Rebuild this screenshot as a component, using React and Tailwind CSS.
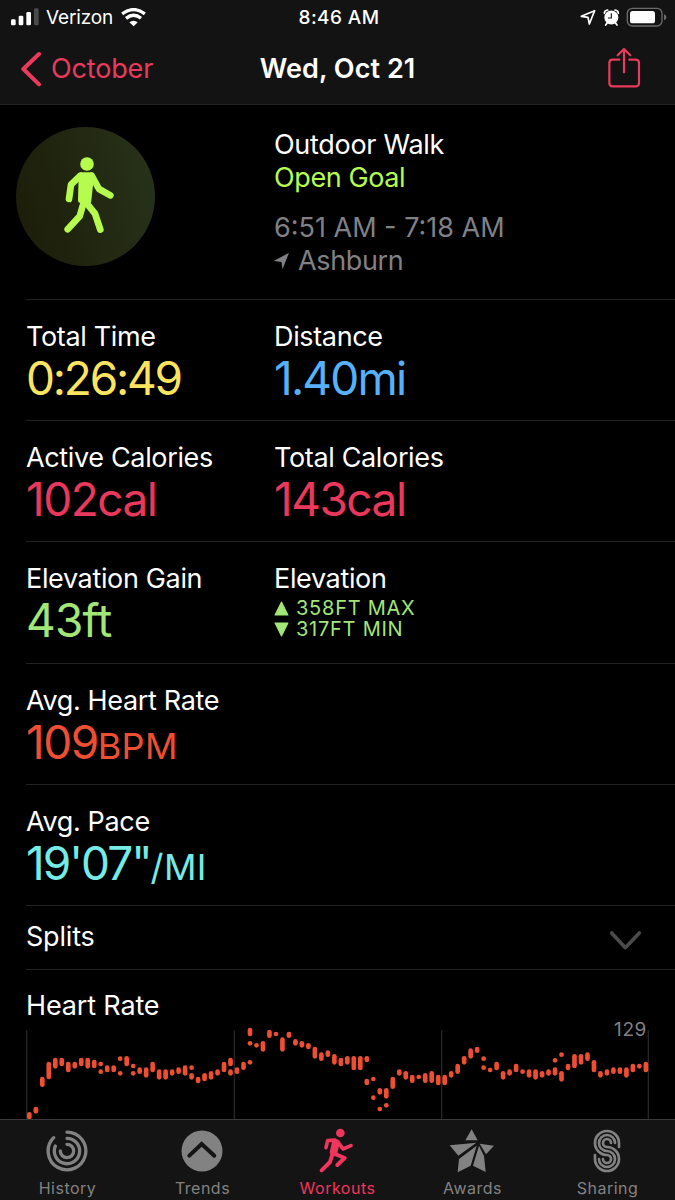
import React from "react";

const tabs = [
  { label: "History", icon: HistoryIcon },
  { label: "Trends", icon: TrendsIcon },
  { label: "Workouts", icon: WorkoutsIcon, active: true },
  { label: "Awards", icon: AwardsIcon },
  { label: "Sharing", icon: SharingIcon },
];

// One entry per sample column, each a list of [top, bottom] ranges.
const heartRate = [
  [[303, 325]], [[287, 308]], [[197, 228]], [[152, 205]], [[140, 173]], [[140, 166]],
  [[152, 184]], [[152, 173]], [[140, 166]], [[140, 173]], [[146, 172]],
  [[152, 166], [175, 189]], [[163, 184]], [[163, 184]], [[136, 150], [180, 194]],
  [[135, 166]], [[158, 172], [180, 194]], [[169, 189]], [[169, 200]], [[152, 184]],
  [[175, 206]], [[175, 206]], [[175, 194]], [[169, 189]], [[163, 194]],
  [[163, 177], [186, 206]], [[197, 217]], [[186, 211]], [[180, 206]], [[175, 194]],
  [[152, 184]], [[140, 166], [175, 194]], [[169, 189]], [[152, 177]],
  [[50, 76], [90, 104], [147, 161]], [[96, 110]], [[90, 122]], [[56, 81]], [[62, 76]],
  [[79, 122]], [[62, 81]], [[84, 104]], [[90, 110]], [[96, 115]], [[107, 143]],
  [[124, 150]], [[118, 138]], [[129, 161]], [[140, 166]], [[135, 161]], [[135, 178]],
  [[135, 178]], [[135, 154], [203, 223]], [[197, 211], [253, 267]],
  [[231, 251], [287, 301]], [[231, 263], [276, 290]], [[197, 234]], [[175, 194]],
  [[180, 206]], [[191, 216]], [[191, 205]], [[186, 216]], [[180, 216]], [[191, 223]],
  [[191, 223]], [[180, 200]], [[158, 189]], [[135, 161]], [[112, 143]], [[107, 126]],
  [[136, 150], [163, 177]], [[170, 184]], [[152, 178]], [[180, 206]], [[175, 194]],
  [[158, 184]], [[175, 189]], [[175, 200]], [[175, 206]], [[180, 200]], [[175, 194]],
  [[141, 155], [169, 194]], [[124, 138], [180, 212]], [[158, 178]], [[129, 172]],
  [[129, 161]], [[124, 150]], [[147, 184]], [[180, 200]], [[175, 194]], [[169, 189]],
  [[169, 189]], [[169, 200]], [[158, 184]], [[158, 173]], [[152, 184]],
];

function HistoryIcon() {
  return (
    <svg width="42" height="42" viewBox="137 45 126 126" fill="none" stroke="currentColor" strokeWidth="10" strokeLinecap="round">
      <path d="M200 51.5A56.5 56.5 0 1 1 160 68" />
      <path d="M200 70A38 38 0 1 1 165 93" />
      <path d="M200 88A20 20 0 1 1 180 108" />
    </svg>
  );
}

function TrendsIcon() {
  return (
    <svg width="42" height="42" viewBox="545 44 126 126" fill="none">
      <circle cx="608" cy="107" r="61.5" fill="currentColor" />
      <path d="M570 121L607 86L645 121" stroke="#141414" strokeWidth="12" strokeLinecap="round" />
    </svg>
  );
}

function WorkoutsIcon() {
  return (
    <svg width="42" height="46" viewBox="949 39 126 138" fill="none" stroke="currentColor" strokeWidth="12" strokeLinecap="round" strokeLinejoin="round">
      <circle cx="1022" cy="54" r="13" fill="currentColor" stroke="none" />
      <path d="M979 98L984 77L1004 75L1014 80L1030 102L1054 92" strokeWidth="11" />
      <path d="M1003 80L1014 84L1006 118L996 112Z" fill="currentColor" />
      <path d="M1000 112L991 141L966 166" />
      <path d="M1002 115L1035 129L1013 150" />
    </svg>
  );
}

function AwardsIcon() {
  return (
    <svg width="46" height="46" viewBox="342 42 138 138" fill="currentColor">
      <path d="M410 46L428 79H391Z" />
      <path d="M344 94L424 86L370 125Z" />
      <path d="M434 89L477 95L453 121Z" />
      <path d="M425 95L372 135L368 175L407 155Z" />
      <path d="M432 95L414 155L452 174L447 126Z" />
    </svg>
  );
}

function SharingIcon() {
  return (
    <svg width="42" height="44" viewBox="752 42 126 132" fill="none" stroke="currentColor" strokeWidth="8" strokeLinecap="round">
      <path d="M851 96V84A36 36 0 1 0 815 120A12 12 0 1 1 803 132" />
      <path d="M839 84A24 24 0 1 0 815 108A24 24 0 1 1 791 132" />
      <path d="M827 84A12 12 0 1 0 815 96A36 36 0 1 1 779 132V120" />
    </svg>
  );
}

const StatusBar = () => (
  <div className="grid h-[34px] grid-cols-3 items-center pl-[11px] pr-[8px]">
    <div className="flex items-center">
      <svg width="28" height="18" viewBox="33 23 84 54" fill="white">
        <rect x="33" y="57" width="14" height="18" rx="4" />
        <rect x="56" y="46" width="14" height="29" rx="4" />
        <rect x="79" y="35" width="14" height="40" rx="4" />
        <rect x="102" y="24" width="14" height="51" rx="4" fill="#4a4a4a" />
      </svg>
      <span className="ml-[7px] w-[75px] pt-[2px] text-[19px] leading-[24px] tracking-[-0.15px]">Verizon</span>
      <svg width="25" height="19" viewBox="362 20 75 57" fill="none" stroke="white" strokeWidth="10">
        <path d="M365.5 37.5Q400 12 433.5 37.5" />
        <path d="M377 51Q400 33 422 51" />
        <path d="M400 75L387 63Q400 54 412 63Z" fill="white" stroke="none" />
      </svg>
    </div>
    <div className="pt-[2px] text-center text-[19px] font-medium leading-[24px] tracking-[0.4px]">8:46 AM</div>
    <div className="flex justify-end">
      <svg width="87" height="20" viewBox="726 19 261 60" fill="none">
        <path d="M730 47L770 30L754 70L750 50Z" stroke="white" strokeWidth="5" strokeLinejoin="round" />
        <circle cx="820" cy="50.5" r="21" fill="white" />
        <path d="M799 38Q799 29 809 28M831 28Q841 29 841 38M808 66L803 73M832 66L837 73" stroke="white" strokeWidth="5" strokeLinecap="round" />
        <path d="M820 38V52H810" stroke="#131313" strokeWidth="3.5" />
        <rect x="868" y="23" width="104" height="53" rx="15" stroke="#6b6b6b" strokeWidth="4" />
        <rect x="876" y="31" width="75" height="37" rx="8" fill="white" />
        <path d="M978 41Q985 43 985 50Q985 57 978 59Z" fill="#6b6b6b" />
      </svg>
    </div>
  </div>
);

const NavBar = () => (
  <div className="grid h-[69px] grid-cols-[1fr_auto_1fr] items-center px-[20px]">
    <div className="flex items-center text-[#ea3b5e]">
      <svg width="22" height="36" viewBox="60 152 66 108" fill="none" stroke="currentColor" strokeWidth="12" strokeLinecap="round" strokeLinejoin="round">
        <path d="M117 161L70 206L117 252" />
      </svg>
      <span className="ml-[9px] pt-[1px] text-[27px] tracking-[-0.15px]">October</span>
    </div>
    <h1 className="pt-[1px] text-[27px] font-semibold tracking-[0.05px]">Wed, Oct 21</h1>
    <div className="flex justify-end pb-[2px] pr-[14px] text-[#ea3b5e]">
      <svg width="34" height="42" viewBox="806 141 102 126" fill="none" stroke="currentColor" strokeWidth="6.5" strokeLinecap="round" strokeLinejoin="round">
        <path d="M843 179H823Q813 179 813 189V248Q813 259 823 259H891Q902 259 902 248V189Q902 179 891 179H873" />
        <path d="M857 217V147M838 166L857 147L876 166" />
      </svg>
    </div>
  </div>
);

const Summary = () => (
  <section className="flex h-[194px] pt-[22px]">
    <div className="w-[274px] pl-[16px]">
      <div className="flex h-[139px] w-[139px] items-center justify-center rounded-full bg-linear-75 from-[#1b1c08] to-[#28331a]">
        <svg width="139" height="139" viewBox="49 51 417 417" fill="none" stroke="#b6fc4f" strokeWidth="20" strokeLinecap="round" strokeLinejoin="round">
          <circle cx="262" cy="162" r="20.5" fill="#b6fc4f" stroke="none" />
          <path d="M246 196H274L266 272L244 270Z" fill="#b6fc4f" strokeWidth="18" />
          <path d="M242 197L214 224L208 267" />
          <path d="M276 197L298 237L332 256" />
          <path d="M253 274L240 319L204 358" />
          <path d="M258 276L286 311L302 359" />
        </svg>
      </div>
    </div>
    <div className="pt-[1px] text-[27px] leading-[33px]">
      <p className="tracking-[-0.3px]">Outdoor Walk</p>
      <p className="tracking-[-0.4px] text-[#b6fc4f]">Open Goal</p>
      <p className="mt-[17px] tracking-[0px] text-[#808085]">6:51 AM - 7:18 AM</p>
      <p className="flex items-center tracking-[-0.35px] text-[#808085]">
        <svg className="mr-[9px]" width="15" height="16" viewBox="44 401 44 46" fill="currentColor">
          <path d="M43 424L88 400L69 448L66 427Z" />
        </svg>
        Ashburn
      </p>
    </div>
  </section>
);

const Metric = ({ label, value, unit, color, tracking = "tracking-[-1.5px]" }) => (
  <div>
    <p className="text-[27px] leading-[35px] tracking-[-0.35px]">{label}</p>
    <p className={`text-[46px] leading-[48px] ${tracking} ${color}`}>
      {value}
      {unit && <span className="text-[36px] tracking-[0.3px]">{unit}</span>}
    </p>
  </div>
);

const Row = ({ children }) => (
  <div className="ml-[26px] grid h-[121.2px] grid-cols-[248px_1fr] border-t border-[#222224] pt-[19px]">
    {children}
  </div>
);

const HeartRateChart = () => (
  <section className="relative ml-[26px] h-[150px] border-t border-[#222224]">
    <h2 className="pt-[18px] text-[27px] leading-[35px] tracking-[-0.15px]">Heart Rate</h2>
    <svg className="absolute left-[-26px] top-[41px]" width="675" height="109" viewBox="0 0 2025 327">
      {[80, 703, 1325, 1945].map((x) => (
        <path key={x} d={`M${x} 58V327`} stroke="#262628" strokeWidth="4" />
      ))}
      {heartRate.map((column, i) =>
        column.map(([top, bottom]) => (
          <rect key={`${i}-${top}`} x={81 + i * 19.47} y={top} width="14" height={bottom - top} rx="7" fill="#ee4f33" />
        ))
      )}
    </svg>
    <span className="absolute right-[28px] top-[47px] text-[19px] leading-[26px] tracking-[0.6px] text-[#808085]">129</span>
  </section>
);

const TabBar = () => (
  <nav className="grid h-[81px] shrink-0 grid-cols-5 border-t border-[#3a3a3a] bg-[#151414]">
    {tabs.map(({ label, icon: Icon, active }) => (
      <div key={label} className={`flex flex-col items-center pt-[7px] ${active ? "text-[#f0365e]" : "text-[#828282]"}`}>
        <div className="flex h-[48px] items-center pr-px">
          <Icon />
        </div>
        <span className="mt-[3px] text-[16px] leading-[20px] tracking-[0.5px]">{label}</span>
      </div>
    ))}
  </nav>
);

const App = () => {
  return (
    <div className="flex h-[1200px] w-[675px] flex-col overflow-hidden bg-black font-[Inter,sans-serif] text-white">
      <header className="h-[105px] shrink-0 border-b border-[#242424] bg-[#131313]">
        <StatusBar />
        <NavBar />
      </header>

      <main className="min-h-0 flex-1 overflow-hidden">
        <Summary />
        <Row>
          <Metric label="Total Time" value="0:26:49" color="text-[#fbe55e]" tracking="tracking-[-2.2px]" />
          <Metric label="Distance" value="1.40mi" color="text-[#56b1fa]" tracking="tracking-[-1.8px]" />
        </Row>
        <Row>
          <Metric label="Active Calories" value="102cal" color="text-[#ea375c]" />
          <Metric label="Total Calories" value="143cal" color="text-[#ea375c]" />
        </Row>
        <Row>
          <Metric label="Elevation Gain" value="43ft" color="text-[#a2e678]" tracking="tracking-[-0.8px]" />
          <div>
            <p className="text-[27px] leading-[35px] tracking-[-0.35px]">Elevation</p>
            <div className="mt-[2px] text-[20px] leading-[21px] tracking-[0.75px] text-[#a2e678]">
              <p className="flex items-center">
                <svg className="mr-[7px]" width="15" height="15" viewBox="0 0 14 14" fill="currentColor">
                  <path d="M7 1L13 13H1Z" stroke="currentColor" strokeLinejoin="round" />
                </svg>
                358FT MAX
              </p>
              <p className="flex items-center">
                <svg className="mr-[7px]" width="15" height="15" viewBox="0 0 14 14" fill="currentColor">
                  <path d="M7 13L1 1H13Z" stroke="currentColor" strokeLinejoin="round" />
                </svg>
                317FT MIN
              </p>
            </div>
          </div>
        </Row>
        <Row>
          <Metric label="Avg. Heart Rate" value="109" unit="BPM" color="text-[#ee4f33]" />
        </Row>
        <Row>
          <Metric label="Avg. Pace" value={"19'07\""} unit="/MI" color="text-[#76ebe5]" tracking="tracking-[-2px]" />
        </Row>
        <div className="ml-[26px] flex h-[64px] items-center justify-between border-t border-[#222224] pr-[32px]">
          <h2 className="text-[27px] tracking-[-0.2px]">Splits</h2>
          <svg className="mt-[7px]" width="34" height="22" viewBox="508 92 102 66" fill="none" stroke="#4b4b4e" strokeWidth="11" strokeLinecap="round" strokeLinejoin="round">
            <path d="M516 101L557 145L599 101" />
          </svg>
        </div>
        <HeartRateChart />
      </main>

      <TabBar />
    </div>
  );
};

export default App;
